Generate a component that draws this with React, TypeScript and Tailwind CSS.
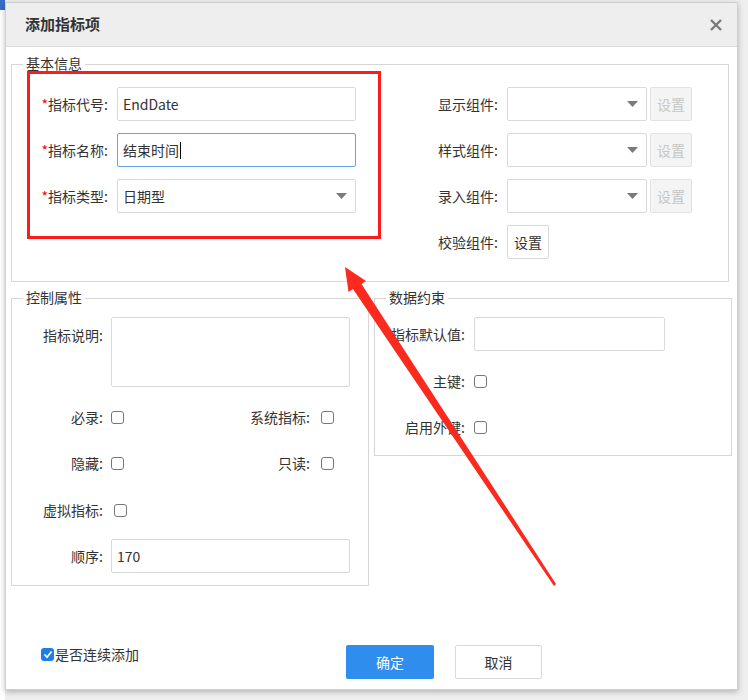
import type { ReactNode } from "react";

const FONT = "font-['Noto_Sans_CJK_SC','Microsoft_YaHei',sans-serif]";

function Legend({ children }: { children: ReactNode }) {
  return (
    <span className="absolute -top-[12px] left-[11px] bg-white px-[3px] text-[14px] leading-[20px] text-[#333]">
      {children}
    </span>
  );
}

function Box({ className, children }: { className?: string; children?: ReactNode }) {
  return (
    <div className={`rounded-[2px] border border-[#d9d9d9] bg-white ${className ?? ""}`}>{children}</div>
  );
}

function Caret() {
  return (
    <svg width="11" height="6" viewBox="0 0 11 6" className="shrink-0">
      <polygon points="0,0 11,0 5.5,6" fill="#7a7a7a" />
    </svg>
  );
}

function SelectBox({ value, className }: { value?: string; className: string }) {
  return (
    <Box className={`flex h-[34px] items-center justify-between pl-[5px] pr-[8px] ${className}`}>
      <span className="text-[14px] text-[#333]">{value}</span>
      <Caret />
    </Box>
  );
}

function Check() {
  return <span className="block size-[13px] rounded-[3px] border border-[#777] bg-white" />;
}

function SetButton({ disabled }: { disabled?: boolean }) {
  return (
    <div
      className={`flex h-[34px] w-[42px] items-center justify-center rounded-[2px] border text-[14px] ${
        disabled ? "border-[#e3e3e3] bg-[#f4f4f4] text-[#c6c6c6]" : "border-[#d9d9d9] bg-white text-[#333]"
      }`}
    >
      设置
    </div>
  );
}

function Req({ children }: { children: ReactNode }) {
  return (
    <span className="w-[98px] pr-[2px] text-right text-[14px] text-[#333]">
      <span className="text-[#f00]">*</span>
      {children}:
    </span>
  );
}

function BasicInfo() {
  const right = [
    { label: "显示组件", select: true },
    { label: "样式组件", select: true },
    { label: "录入组件", select: true },
    { label: "校验组件", select: false },
  ];
  return (
    <div className="relative ml-[5px] mt-[17px] h-[218px] w-[718px] border border-[#d6d6d6]">
      <Legend>基本信息</Legend>
      <div className="flex pt-[22px]">
        <div className="flex flex-col gap-[12px]">
          <div className="flex h-[34px] items-center gap-[7px]">
            <Req>指标代号</Req>
            <Box className="flex h-[34px] w-[239px] items-center pl-[5px] text-[14px] text-[#333]">EndDate</Box>
          </div>
          <div className="flex h-[34px] items-center gap-[7px]">
            <Req>指标名称</Req>
            <div className="flex h-[34px] w-[239px] items-center rounded-[2px] border border-[#66a3e0] bg-white pl-[5px] text-[14px] text-[#333]">
              结束时间
              <span className="ml-[1px] h-[17px] w-px bg-black" />
            </div>
          </div>
          <div className="flex h-[34px] items-center gap-[7px]">
            <Req>指标类型</Req>
            <SelectBox value="日期型" className="w-[239px]" />
          </div>
        </div>
        <div className="ml-[64px] flex flex-col gap-[12px]">
          {right.map((r) => (
            <div key={r.label} className="flex h-[34px] items-center">
              <span className="w-[80px] pr-[2px] text-right text-[14px] text-[#333]">{r.label}:</span>
              {r.select ? (
                <div className="ml-[7px] flex gap-[3px]">
                  <SelectBox className="w-[140px]" />
                  <SetButton disabled />
                </div>
              ) : (
                <div className="ml-[7px]">
                  <SetButton />
                </div>
              )}
            </div>
          ))}
        </div>
      </div>
    </div>
  );
}

function Label({ w, children }: { w: string; children: ReactNode }) {
  return <span className={`${w} pr-[2px] text-right text-[14px] text-[#333]`}>{children}:</span>;
}

function Control() {
  return (
    <div className="relative h-[288px] w-[358px] border border-[#d6d6d6]">
      <Legend>控制属性</Legend>
      <div className="flex flex-col pt-[18px]">
        <div className="flex items-start">
          <Label w="w-[93px] pt-[8px]">指标说明</Label>
          <Box className="ml-[6px] h-[70px] w-[239px]" />
        </div>
        <div className="mt-[13px] grid h-[34px] grid-cols-[93px_107px_100px_auto] items-center">
          <Label w="">必录</Label>
          <span className="ml-[6px]"><Check /></span>
          <Label w="">系统指标</Label>
          <span className="ml-[9px]"><Check /></span>
        </div>
        <div className="mt-[12px] grid h-[34px] grid-cols-[93px_107px_100px_auto] items-center">
          <Label w="">隐藏</Label>
          <span className="ml-[6px]"><Check /></span>
          <Label w="">只读</Label>
          <span className="ml-[9px]"><Check /></span>
        </div>
        <div className="mt-[13px] flex h-[34px] items-center">
          <Label w="w-[93px]">虚拟指标</Label>
          <span className="ml-[9px]"><Check /></span>
        </div>
        <div className="mt-[12px] flex items-center">
          <Label w="w-[93px]">顺序</Label>
          <Box className="ml-[6px] flex h-[34px] w-[239px] items-center pl-[5px] text-[14px] text-[#333]">170</Box>
        </div>
      </div>
    </div>
  );
}

function Constraint() {
  return (
    <div className="relative h-[158px] w-[358px] border border-[#d6d6d6]">
      <Legend>数据约束</Legend>
      <div className="flex flex-col pt-[18px]">
        <div className="flex items-center">
          <Label w="w-[92px]">指标默认值</Label>
          <Box className="ml-[7px] h-[34px] w-[191px]" />
        </div>
        <div className="mt-[13px] flex h-[34px] items-center">
          <Label w="w-[92px]">主键</Label>
          <span className="ml-[7px]"><Check /></span>
        </div>
        <div className="mt-[12px] flex h-[34px] items-center">
          <Label w="w-[92px]">启用外键</Label>
          <span className="ml-[7px]"><Check /></span>
        </div>
      </div>
    </div>
  );
}

function Annotation() {
  // red box + arrow drawn over the screenshot
  return (
    <svg className="pointer-events-none absolute left-0 top-0" width="748" height="700">
      <rect x="28.5" y="72.5" width="351" height="165" fill="none" stroke="#fb1d1d" strokeWidth="3" />
      <polygon
        points="345,267 366,281 361.5,284 556,584 554,586 353,289 348.5,292"
        fill="#fb2a1e"
      />
    </svg>
  );
}

export default function App() {
  return (
    <div className={`relative h-[700px] w-[748px] overflow-hidden bg-[#efefef] pl-[5px] pt-[2px] ${FONT}`}>
      <div className="absolute left-0 top-0 h-[700px] w-[5px] bg-white">
        <div className="h-[10px] bg-[#3b6fc4]" />
      </div>
      <div className="relative flex h-[688px] w-[733px] flex-col border border-[#cfcfcf] bg-white shadow-[0_2px_6px_rgba(0,0,0,0.25)]">
        <div className="flex h-[44px] shrink-0 items-center justify-between border-b border-[#dcdcdc] bg-[#eeeeee] pl-[19px] pr-[15px]">
          <span className="text-[15px] font-bold text-[#333]">添加指标项</span>
          <svg width="12" height="12" viewBox="0 0 12 12">
            <path d="M1 1L11 11M11 1L1 11" stroke="#7a7a7a" strokeWidth="2.4" />
          </svg>
        </div>
        <BasicInfo />
        <div className="ml-[5px] mt-[16px] flex gap-[5px]">
          <Control />
          <Constraint />
        </div>
        <div className="mt-auto mb-[10px] flex items-start pl-[35px]">
          <div className="-mt-[1px] flex w-[305px] items-center gap-[1px] text-[14px] text-[#333]">
            <span className="flex size-[13px] items-center justify-center rounded-[3px] bg-[#1e7ee6]">
              <svg width="10" height="9" viewBox="0 0 10 9">
                <path d="M1.5 4.5L4 7.2L8.6 1.5" fill="none" stroke="white" strokeWidth="1.8" />
              </svg>
            </span>
            是否连续添加
          </div>
          <div className="flex h-[34px] w-[88px] items-center justify-center rounded-[2px] bg-[#2f8ded] text-[14px] text-white">
            确定
          </div>
          <div className="ml-[21px] flex h-[34px] w-[87px] items-center justify-center rounded-[2px] border border-[#d9d9d9] bg-white text-[14px] text-[#333]">
            取消
          </div>
        </div>
      </div>
      <Annotation />
    </div>
  );
}
